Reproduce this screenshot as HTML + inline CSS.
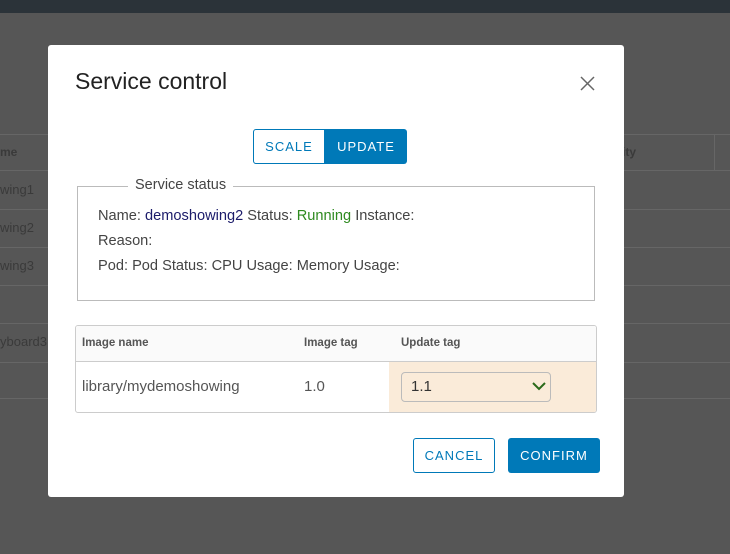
<!DOCTYPE html>
<html><head><style>
body{margin:0;width:730px;height:554px;position:relative;overflow:hidden;background:#565656;font-family:"Liberation Sans",sans-serif;}
.top{position:absolute;left:0;top:0;width:730px;height:13px;background:#2b3339;}
.bgl{position:absolute;left:0;width:730px;height:1px;background:#666;}
.bgt{position:absolute;color:#3a3a3a;font-size:13px;}
.modal{position:absolute;left:48px;top:45px;width:576px;height:452px;background:#fff;border-radius:3px;}
.abs{position:absolute;}
</style></head><body>
<div class="top"></div>
<div class="bgl" style="top:134px"></div>
<div class="bgl" style="top:170px"></div>
<div class="bgl" style="top:209px"></div>
<div class="bgl" style="top:247px"></div>
<div class="bgl" style="top:285px"></div>
<div class="bgl" style="top:323px"></div>
<div class="bgl" style="top:362px"></div>
<div class="bgl" style="top:398px"></div>
<div class="bgt" style="left:0;top:145px;font-weight:bold;font-size:12px">me</div>
<div class="bgt" style="left:0;top:182px">wing1</div>
<div class="bgt" style="left:0;top:220px">wing2</div>
<div class="bgt" style="left:0;top:258px">wing3</div>
<div class="bgt" style="left:0;top:334px">yboard3</div>
<div class="bgt" style="left:622px;top:145px;font-weight:bold;font-size:12px">ity</div>
<div class="abs" style="left:714px;top:134px;width:1px;height:36px;background:#666"></div>
<div class="modal">
 <div class="abs" style="left:27px;top:23px;font-size:23px;color:#222;font-weight:300">Service control</div>
 <svg class="abs" style="left:532px;top:31px" width="15" height="15"><path d="M1 1L14 14M14 1L1 14" stroke="#666" stroke-width="1.5"/></svg>
 <div class="abs" style="left:205px;top:84px;width:72px;height:35px;box-sizing:border-box;border:1px solid #0079b8;border-radius:3px 0 0 3px;color:#0079b8;font-size:13px;letter-spacing:1px;text-align:center;line-height:33px">SCALE</div>
 <div class="abs" style="left:277px;top:84px;width:82px;height:35px;background:#0079b8;border-radius:0 3px 3px 0;color:#fff;font-size:13px;letter-spacing:1px;text-align:center;line-height:35px">UPDATE</div>
 <div class="abs" style="left:29px;top:141px;width:518px;height:115px;box-sizing:border-box;border:1px solid #bbb"></div>
 <div class="abs" style="left:80px;top:132px;background:#fff;padding:0 7px;font-size:14.5px;color:#444">Service status</div>
 <div class="abs" style="left:50px;top:163px;font-size:14.6px;color:#444">Name: <span style="color:#1b1b6a">demoshowing2</span> Status: <span style="color:#2e8a1f">Running</span> Instance:</div>
 <div class="abs" style="left:50px;top:188px;font-size:14.6px;color:#444">Reason:</div>
 <div class="abs" style="left:50px;top:213px;font-size:14.6px;color:#444">Pod: Pod Status: CPU Usage: Memory Usage:</div>
 <div class="abs" style="left:27px;top:280px;width:522px;height:88px;box-sizing:border-box;border:1px solid #ccc;border-radius:3px;overflow:hidden">
  <div class="abs" style="left:0;top:0;width:522px;height:35px;background:#fafafa;border-bottom:1px solid #ccc"></div>
  <div class="abs" style="left:6px;top:11px;font-size:11.5px;font-weight:bold;color:#555">Image name</div>
  <div class="abs" style="left:228px;top:11px;font-size:11.5px;font-weight:bold;color:#555">Image tag</div>
  <div class="abs" style="left:325px;top:11px;font-size:11.5px;font-weight:bold;color:#555">Update tag</div>
  <div class="abs" style="left:313px;top:36px;width:209px;height:52px;background:#faebd9"></div>
  <div class="abs" style="left:6px;top:52px;font-size:15px;color:#555">library/mydemoshowing</div>
  <div class="abs" style="left:228px;top:52px;font-size:15px;color:#555">1.0</div>
  <div class="abs" style="left:325px;top:46px;width:150px;height:30px;box-sizing:border-box;border:1px solid #bbb;border-radius:4px;background:#faebd9"></div>
  <div class="abs" style="left:335px;top:52px;font-size:15px;color:#333">1.1</div>
  <svg class="abs" style="left:456px;top:55px" width="14" height="10"><path d="M1 2L7 8L13 2" stroke="#2a6a1a" stroke-width="2" fill="none"/></svg>
 </div>
 <div class="abs" style="left:365px;top:393px;width:82px;height:35px;box-sizing:border-box;border:1px solid #0079b8;border-radius:3px;color:#0079b8;font-size:13px;letter-spacing:1px;text-align:center;line-height:33px">CANCEL</div>
 <div class="abs" style="left:460px;top:393px;width:92px;height:35px;background:#0079b8;border-radius:3px;color:#fff;font-size:13px;letter-spacing:1px;text-align:center;line-height:35px">CONFIRM</div>
</div>
</body></html>
